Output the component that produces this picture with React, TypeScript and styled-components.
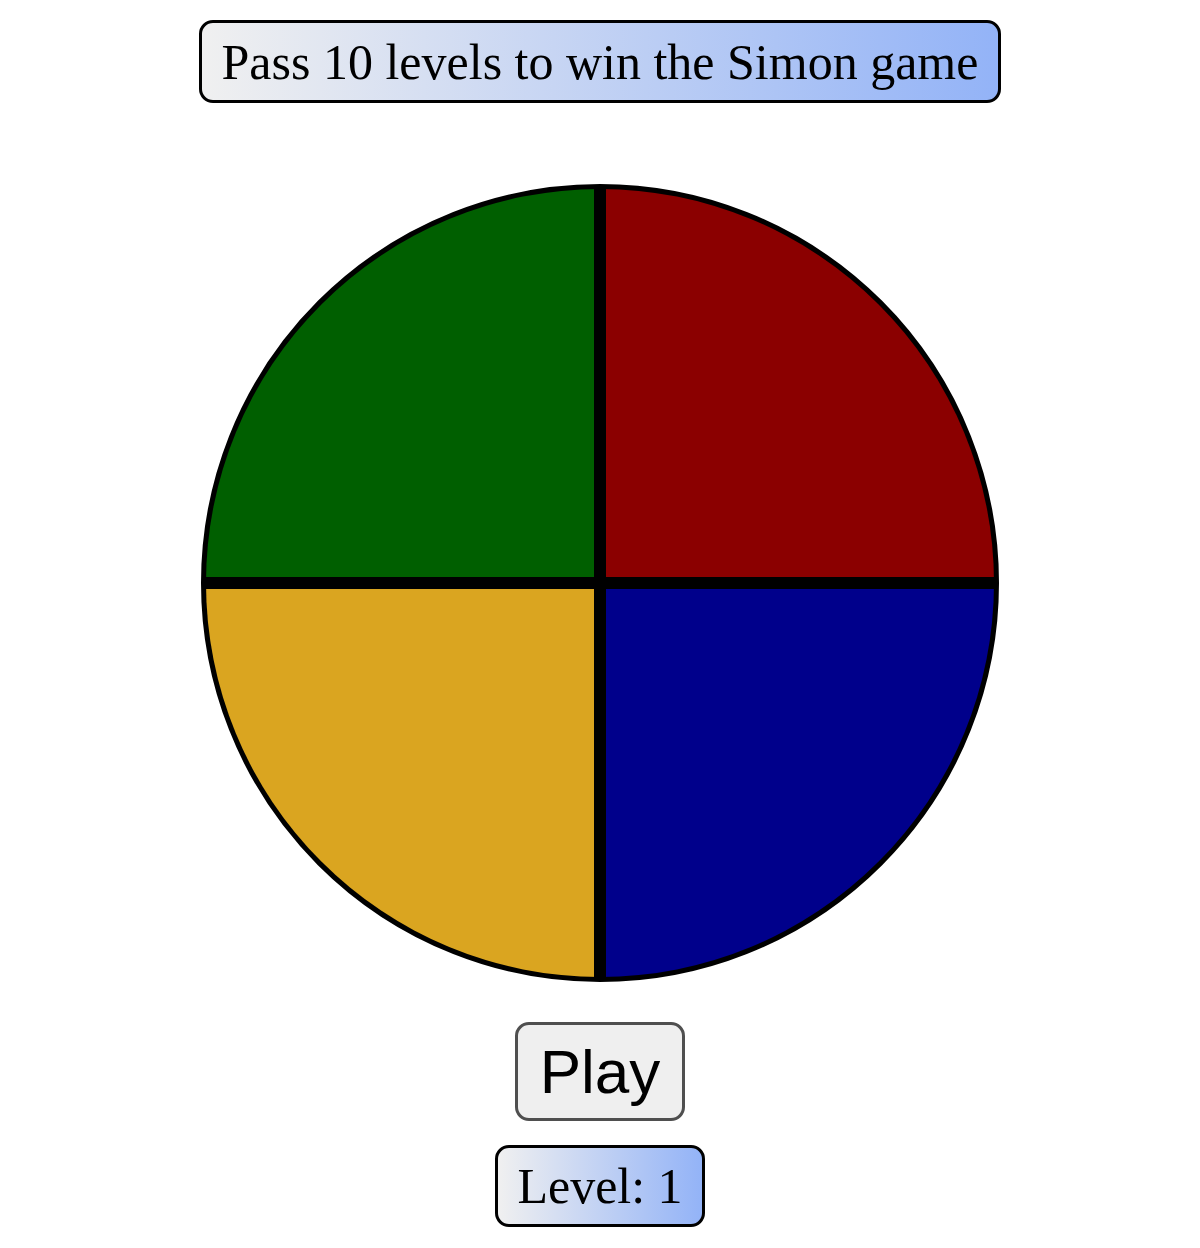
import React from "react";
import styled, { createGlobalStyle } from "styled-components";

const Global = createGlobalStyle`
  html, body { margin: 0; padding: 0; background: #ffffff; }
  body { font-family: "Liberation Serif", "Times New Roman", serif; }
`;

const Page = styled.main`
  display: flex;
  flex-direction: column;
  align-items: center;
  padding-top: 20px;
`;

const Banner = styled.div`
  box-sizing: border-box;
  width: 802px;
  height: 83px;
  display: flex;
  align-items: center;
  justify-content: center;
  border: 3px solid #000;
  border-radius: 14px;
  background: linear-gradient(to right, #f0f0f0, #93b3f7);
  font-family: "Liberation Serif", "Times New Roman", serif;
  font-size: 50px;
  line-height: 1;
  color: #000;
`;

const Board = styled.div`
  box-sizing: border-box;
  margin-top: 81px;
  width: 798px;
  height: 798px;
  border-radius: 50%;
  border: 5px solid #000;
  background: #000;
  overflow: hidden;
  display: grid;
  grid-template-columns: 1fr 1fr;
  grid-template-rows: 1fr 1fr;
  gap: 12px;
`;

const Quadrant = styled.button<{ $color: string }>`
  border: none;
  padding: 0;
  margin: 0;
  background: ${(p) => p.$color};
  cursor: pointer;
`;

const PlayButton = styled.button`
  box-sizing: border-box;
  margin-top: 40px;
  width: 170px;
  height: 99px;
  border: 3px solid #4f4f4f;
  border-radius: 14px;
  background: #efefef;
  font-family: "Liberation Sans", Arial, sans-serif;
  font-size: 62px;
  line-height: 1;
  color: #000;
  padding: 0;
  cursor: pointer;
`;

const LevelBox = styled.div`
  box-sizing: border-box;
  margin-top: 24px;
  width: 210px;
  height: 82px;
  display: flex;
  align-items: center;
  justify-content: center;
  border: 3px solid #000;
  border-radius: 14px;
  background: linear-gradient(to right, #f0f0f0, #93b3f7);
  font-family: "Liberation Serif", "Times New Roman", serif;
  font-size: 50px;
  line-height: 1;
  color: #000;
`;

const quadrants = ["#005f00", "#8b0000", "#daa520", "#00008b"];

export default function App() {
  return (
    <>
      <Global />
      <Page>
        <Banner>Pass 10 levels to win the Simon game</Banner>
        <Board>
          {quadrants.map((c) => (
            <Quadrant key={c} $color={c} aria-label={c} />
          ))}
        </Board>
        <PlayButton>Play</PlayButton>
        <LevelBox>Level: 1</LevelBox>
      </Page>
    </>
  );
}
